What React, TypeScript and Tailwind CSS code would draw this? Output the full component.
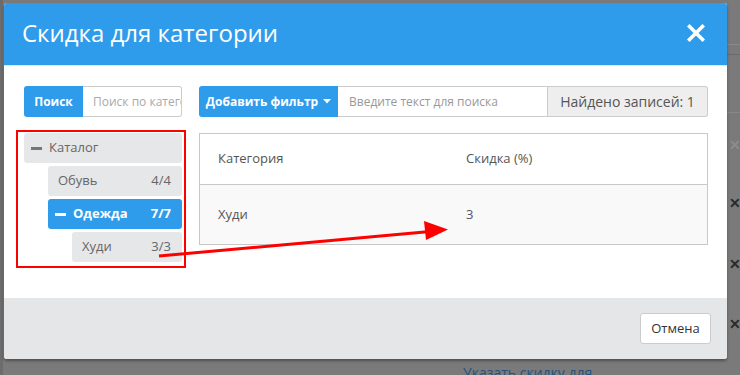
import React from "react"

const font = "font-['Open_Sans','Liberation_Sans',sans-serif]"

const TreeItem = ({
  label,
  count,
  indent,
  active,
  open,
}: {
  label: string
  count?: string
  indent: string
  active?: boolean
  open?: boolean
}) => (
  <div
    className={`${indent} h-[30px] rounded-[3px] flex items-center pl-[7px] pr-[11px] text-[13px] ${
      active ? "bg-[#2e9cea] text-white font-bold" : "bg-[#e6e7e9] text-[#666]"
    }`}
  >
    {open && (
      <span className={`inline-block w-[11px] h-[3px] mr-[7px] ${active ? "bg-white" : "bg-[#777]"}`} />
    )}
    <span className={open ? "" : "pl-[3px]"}>{label}</span>
    {count && <span className="ml-auto">{count}</span>}
  </div>
)

const App = () => {
  return (
    <div className={`relative w-[740px] h-[375px] overflow-hidden bg-[#7a7a7a] ${font}`}>
      {/* page behind the overlay */}
      <div className="absolute left-0 top-0 w-[3px] h-full bg-[#6c6c6c]" />
      <div className="absolute right-0 top-[44px] w-[14px] h-px bg-[#8a8a8a]" />
      <div className="absolute right-0 top-[54px] w-[14px] h-px bg-[#6a6a6a]" />
      <div className="absolute right-0 top-[112px] w-[14px] h-px bg-[#888]" />
      <span className="absolute left-[729px] top-[134px] text-[14px] font-bold text-[#8c8c8c]">✕</span>
      <span className="absolute left-[729px] top-[192px] text-[14px] font-bold text-[#2a2a2a]">✕</span>
      <span className="absolute left-[729px] top-[253px] text-[14px] font-bold text-[#2a2a2a]">✕</span>
      <span className="absolute left-[729px] top-[313px] text-[14px] font-bold text-[#2a2a2a]">✕</span>
      <span className="absolute left-[463px] top-[362px] text-[14px] text-[#23527c] underline">
        Указать скидку для
      </span>

      {/* modal */}
      <div className="relative ml-[4px] mt-[3px] w-[723px] rounded-[3px] overflow-hidden bg-white shadow-[0_2px_3px_rgba(0,0,0,0.35)]">
        <div className="h-[63px] bg-[#2e9cea] flex items-center justify-between pl-[18px] pr-[22px] border-b border-[#d9e8f4]">
          <h1 className="text-[24px] text-white font-normal leading-none mt-[-2px]">Скидка для категории</h1>
          <svg width="18" height="18" viewBox="0 0 18 18" className="mt-[-2px]">
            <path d="M2.5 2.5 L15.5 15.5 M15.5 2.5 L2.5 15.5" stroke="white" strokeWidth="3.6" strokeLinecap="square" />
          </svg>
        </div>

        <div className="h-[232px] flex gap-[17px] pl-[20px] pt-[20px]">
          {/* left column */}
          <div className="w-[158px]">
            <div className="flex h-[31px]">
              <button className="w-[59px] bg-[#2e9cea] text-white text-[12px] font-bold rounded-l-[3px]">Поиск</button>
              <div className="flex-1 border border-[#ccc] border-l-0 rounded-r-[3px] flex items-center pl-[10px] overflow-hidden whitespace-nowrap text-[12px] text-[#aaa]">
                Поиск по категории
              </div>
            </div>
            <div className="mt-[16px] flex flex-col gap-[3px]">
              <TreeItem label="Каталог" indent="ml-0" open />
              <TreeItem label="Обувь" count="4/4" indent="ml-[24px]" />
              <TreeItem label="Одежда" count="7/7" indent="ml-[24px]" active open />
              <TreeItem label="Худи" count="3/3" indent="ml-[48px]" />
            </div>
          </div>

          {/* right column */}
          <div className="w-[509px]">
            <div className="flex h-[31px]">
              <button className="w-[139px] bg-[#2e9cea] text-white text-[12px] font-bold rounded-l-[3px] flex items-center justify-center gap-[5px]">
                Добавить фильтр
                <svg width="8" height="5" viewBox="0 0 8 5">
                  <path d="M0 0 H8 L4 4.5 Z" fill="white" />
                </svg>
              </button>
              <div className="w-[210px] border border-[#ccc] border-l-0 flex items-center pl-[11px] text-[12px] text-[#999] whitespace-nowrap">
                Введите текст для поиска
              </div>
              <div className="flex-1 border border-[#ccc] border-l-0 bg-[#eee] rounded-r-[3px] flex items-center justify-center text-[14px] text-[#555]">
                Найдено записей: 1
              </div>
            </div>
            <div className="mt-[16px] border border-[#c8c8c8] text-[13px] text-[#555]">
              <div className="h-[51px] flex items-center border-b border-[#c8c8c8] bg-white">
                <div className="w-[248px] pl-[18px]">Категория</div>
                <div className="pl-[18px]">Скидка (%)</div>
              </div>
              <div className="h-[59px] flex items-center bg-[#f9f9f9]">
                <div className="w-[248px] pl-[18px]">Худи</div>
                <div className="pl-[18px]">3</div>
              </div>
            </div>
          </div>
        </div>

        <div className="h-[61px] bg-[#e5e6e8] flex items-center justify-end pr-[16px]">
          <button className="w-[71px] h-[31px] bg-white border border-[#ccc] rounded-[3px] text-[13px] text-[#333]">
            Отмена
          </button>
        </div>
      </div>

      {/* annotation */}
      <div className="absolute left-[16px] top-[130px] w-[170px] h-[138px] border-2 border-[#f00]" />
      <svg className="absolute left-0 top-0" width="740" height="375" viewBox="0 0 740 375">
        <line x1="159" y1="256" x2="430" y2="231.5" stroke="#f00" strokeWidth="3" />
        <polygon points="424,221 448,229.5 426,240" fill="#f00" />
      </svg>
    </div>
  )
}

export default App
